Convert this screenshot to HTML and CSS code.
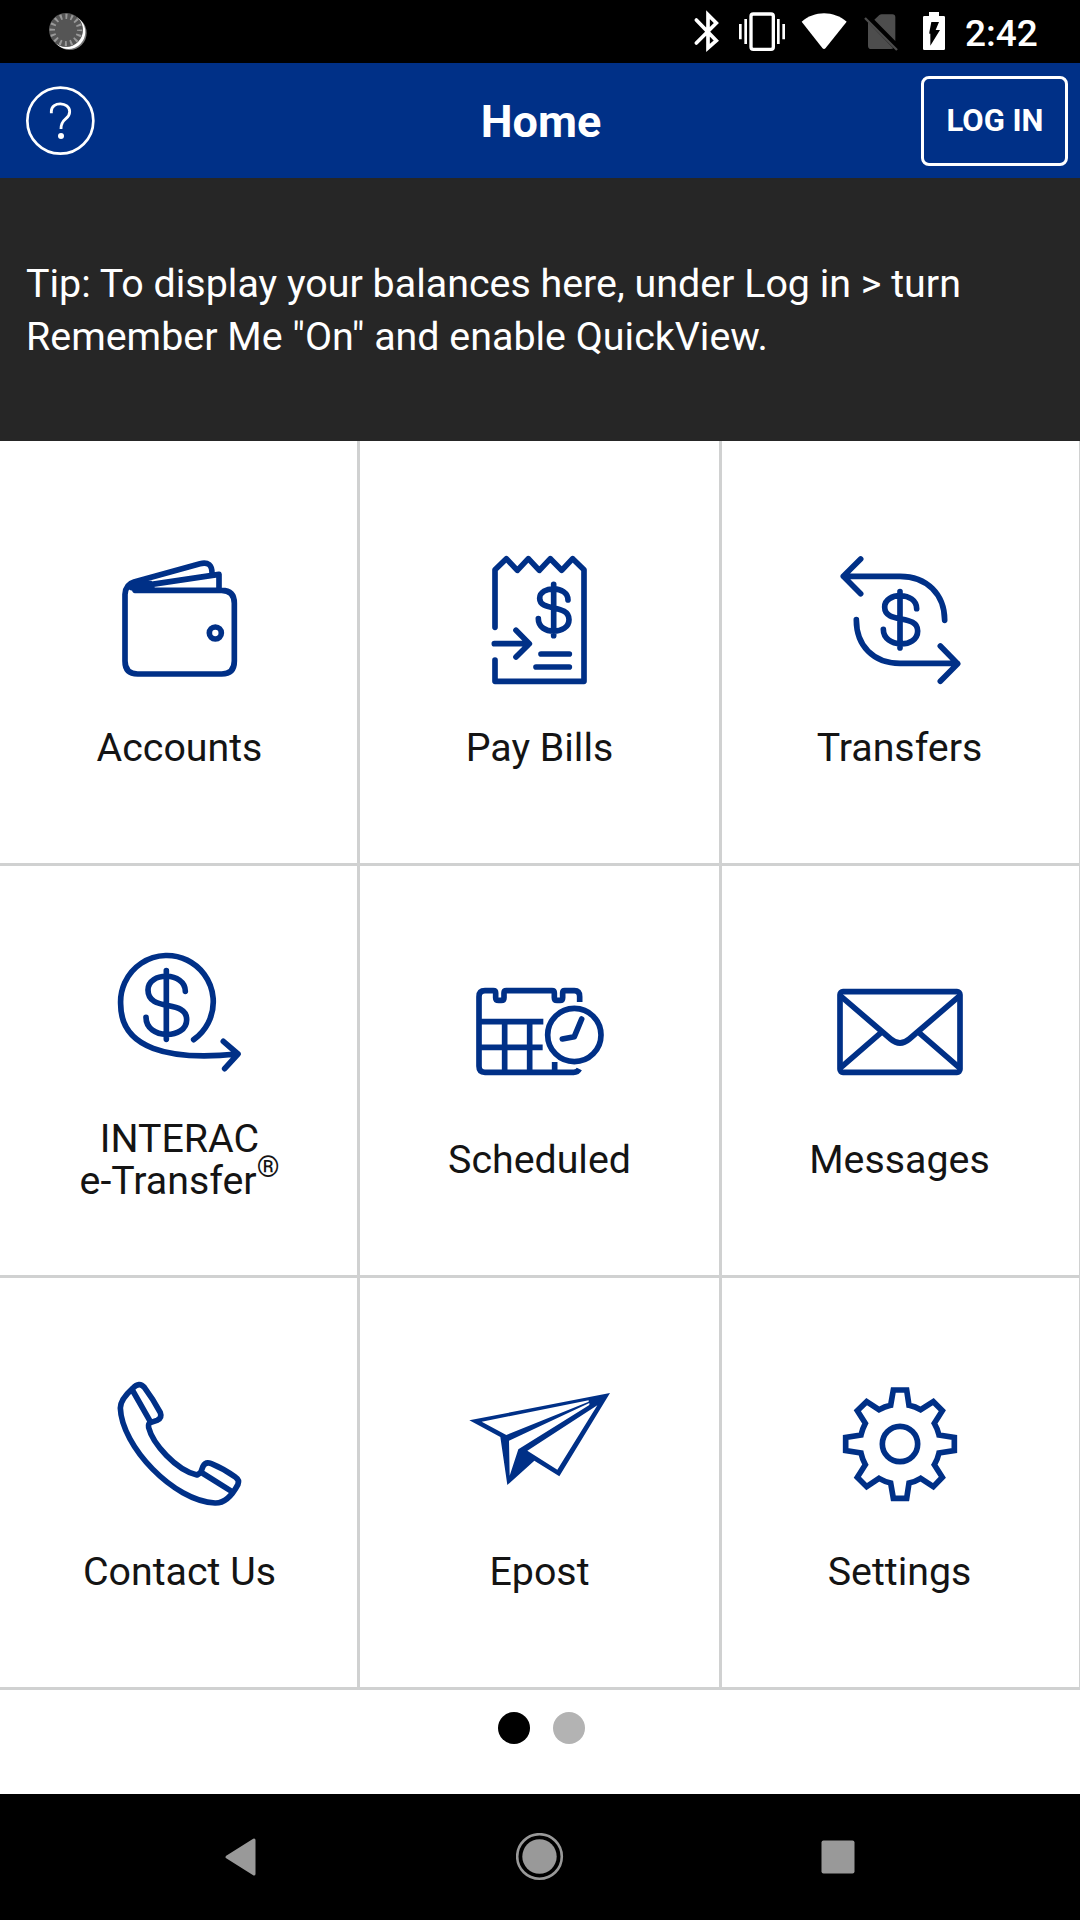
FILE: index.html
```
<!DOCTYPE html>
<html lang="en">
<head>
	<meta charset="UTF-8">
	<title>Home</title>
	<link rel="stylesheet" href="styles.css">
</head>
<body>
	<div class="status">
		<svg class="spinner" width="40" height="40" viewBox="145 34 120 120">
			<circle cx="210" cy="97" r="51" fill="#777"/>
			<circle cx="206" cy="94" r="51" fill="#fff"/>
			<circle cx="199" cy="88" r="51" fill="#555"/>
			<circle cx="199" cy="88" r="41" fill="none" stroke="#999" stroke-width="16" stroke-dasharray="6 10.1" stroke-dashoffset="3"/>
		</svg>
		<div class="status-icons">
			<svg width="35" height="63" viewBox="90 0 105 189">
				<path d="M109 60L169 122L144 144V44L169 69L109 129" fill="none" stroke="#fff" stroke-width="11" stroke-linecap="round" stroke-linejoin="miter"/>
			</svg>
			<svg width="55" height="63" viewBox="225 0 165 189">
				<rect x="273" y="42" width="67" height="106" rx="7" fill="none" stroke="#fff" stroke-width="10"/>
				<path d="M241 72V118M257 57V132M355 57V132M371 72V118" stroke="#fff" stroke-width="8"/>
			</svg>
			<svg width="50" height="63" viewBox="420 0 150 189">
				<path d="M425 65C462 31 522 31 560 65L497 144Q492 150 487 144Z" fill="#fff"/>
			</svg>
			<svg width="45" height="63" viewBox="600 0 135 189">
				<path d="M643 59L658 45Q661 43 665 43H697Q706 43 706 52V123ZM624 67L700 145Q697 147 693 147H634Q624 147 624 137Z" fill="#4d4d4d"/>
				<path d="M615 54L711 150" stroke="#4d4d4d" stroke-width="7"/>
				<path d="M632 58L712 138" stroke="#000" stroke-width="6"/>
			</svg>
			<svg width="35" height="63" viewBox="765 0 105 189">
				<path d="M807 36H837V48H851Q855 48 855 52V146Q855 150 851 150H793Q789 150 789 146V52Q789 48 793 48H807Z" fill="#fff"/>
				<path d="M814 66H837L827 90H840L811 137V101H808V97Z" fill="#000"/>
			</svg>
		</div>
		<span class="time">2:42</span>
	</div>

	<div class="header">
		<svg class="help" width="70" height="70" viewBox="77 257 210 210" fill="none" stroke="#fff">
			<circle cx="180" cy="361" r="99" stroke-width="8"/>
			<path d="M153 339V333C153 302 208 304 208 334C208 359 182 351 182 386" stroke-width="8.500"/>
			<circle cx="182" cy="407" r="9" fill="#fff" stroke="none"/>
		</svg>
		<h1>Home</h1>
		<div class="login">LOG IN</div>
	</div>

	<div class="tip">
		<p>Tip: To display your balances here, under Log in &gt; turn<br>Remember Me "On" and enable QuickView.</p>
	</div>

	<div class="grid">
		<div class="item first">
			<svg class="icon" viewBox="0 0 480 480">
				<path d="M105 151H365Q403 151 403 190V363Q403 402 365 402H113Q75 402 75 363V163Q77 133 102 126L300 71Q337 62 336 101M150 134L357 103V148"/>
				<path class="fill" d="M84 145Q90 124 118 123L155 122L165 145V152H105Q88 154 84 145Z"/>
				<circle cx="346" cy="279" r="18"/>
			</svg>
			<p>Accounts</p>
		</div>
		<div class="item">
			<svg class="icon" viewBox="0 0 480 480">
				<path d="M105 262V89L139 56L172 91L205 56L238 91L271 56L305 91L338 56L372 89V424H105V360M103 311H207M168 271L208 311L168 351M243 342H328M228 381H328"/>
				<path d="M281 133V287M324 180C324 136 239 137 239 175C239 217 327 190 327 239C327 284 235 287 235 236"/>
			</svg>
			<p>Pay Bills</p>
		</div>
		<div class="item last">
			<svg class="icon" viewBox="0 0 480 480">
				<path d="M122 57L70 109L122 161M70 109H240C320 109 374 163 374 241M109 239C109 317 160 370 240 370H412M361 318L413 371L361 424"/>
				<path d="M240 155V324M290 206C290 154 194 156 194 201C194 254 293 220 293 273C293 326 190 325 190 268"/>
			</svg>
			<p>Transfers</p>
		</div>
		<div class="item first">
			<svg class="icon" viewBox="120 33 480 480">
				<path d="M401 296A139 139 0 1 0 182 190C182 322 325 360 532 339M490 301L534 339L494 383"/>
				<path d="M319 89V295M376 151C376 92 264 91 264 147C264 215 380 173 380 236C380 296 258 297 258 229"/>
			</svg>
			<p class="two">INTERAC<br>e-Transfer<sup>®</sup></p>
		</div>
		<div class="item">
			<svg class="icon" viewBox="0 -24 480 480">
				<path class="butt" d="M359 126V110Q359 92 343 92H314Q308 92 308 99V113Q308 121 300 121H291Q283 121 283 113V99Q283 92 276 92H139Q132 92 132 99V113Q132 121 124 121H116Q107 121 107 113V99Q107 92 100 92H75Q57 92 57 110V319Q57 337 75 337H341Q353 337 358 327M57 185H250M57 262H248M134 185V337M209 185V337M284 306V337"/>
				<circle cx="343" cy="225" r="80"/>
				<path d="M365 177L343 230L307 237"/>
			</svg>
			<p>Scheduled</p>
		</div>
		<div class="item last">
			<svg class="icon" viewBox="0 -24 480 480">
				<rect x="60" y="95" width="360" height="242" rx="9"/>
				<path d="M63 109L212 237Q240 261 268 237L417 109M63 322L184 217M417 322L296 217"/>
			</svg>
			<p>Messages</p>
		</div>
		<div class="item first">
			<svg class="icon" viewBox="0 12 480 480">
				<path d="M98 85Q118 64 133 82Q160 118 181 158Q187 174 171 181L151 188Q144 191 146 203C158 251 228 330 291 345L302 338L309 319Q317 304 334 311Q373 327 407 352Q419 360 414 373C396 407 371 430 345 429C221 423 65 259 61 144C61 127 78 103 98 85ZM97 90L151 185M302 336L396 395"/>
			</svg>
			<p>Contact Us</p>
		</div>
		<div class="item">
			<svg class="icon plane" viewBox="0 -18 480 480">
				<path fill-rule="evenodd" d="M28 151L450 69L298 319L223 272L142 345L121 201ZM65 155L139 195L386 95L386 91ZM147 212L149 317L175 238L388 105L388 99ZM202 242L292 299L412 106Z"/>
			</svg>
			<p>Epost</p>
		</div>
		<div class="item last">
			<svg class="icon miter" viewBox="0 12 480 480">
				<path d="M220 90H260L267 136Q286 140 302 149L340 125L367 152L343 190Q353 207 357 225L403 232V272L357 279Q353 298 343 314L367 352L340 380L302 355Q286 365 267 369L260 415H220L212 369Q194 365 177 355L140 380L112 352L136 314Q127 298 123 279L77 272V232L123 225Q127 207 136 190L112 152L140 125L177 149Q194 140 212 136Z"/>
				<circle cx="240" cy="252" r="53"/>
			</svg>
			<p>Settings</p>
		</div>
	</div>

	<div class="pager">
		<i class="on"></i>
		<i></i>
	</div>

	<div class="nav">
		<svg width="48" height="48" viewBox="0 0 48 48">
			<path d="M10 24L37 7V41Z" fill="#999" stroke="#999" stroke-width="3" stroke-linejoin="round"/>
		</svg>
		<svg width="48" height="48" viewBox="0.5 0.5 48 48">
			<circle cx="24" cy="24" r="22.300" fill="none" stroke="#999" stroke-width="2.600"/>
			<circle cx="24" cy="24" r="17.200" fill="#999"/>
		</svg>
		<svg width="48" height="48" viewBox="0 0 48 48">
			<rect x="7.500" y="7.500" width="33" height="33" rx="2" fill="#999"/>
		</svg>
	</div>
</body>
</html>
```
FILE: styles.css
```
*{
	margin: 0;
	padding: 0;
	box-sizing: border-box;
}
body{
	width: 1080px;
	height: 1920px;
	background: #fff;
	font-family: Roboto, "Liberation Sans", sans-serif;
	overflow: hidden;
}
svg{
	display: block;
	flex: none;
}
.status{
	display: flex;
	align-items: center;
	height: 63px;
	padding-left: 48px;
	background: #000;
	color: #fff;
}
.status-icons{
	display: flex;
	gap: 10px;
	margin-left: 602px;
}
.time{
	margin-left: 15px;
	padding-top: 3px;
	font-size: 37px;
	font-weight: 500;
}
.header{
	display: grid;
	grid-template-columns: 147px 1fr 147px;
	align-items: center;
	height: 115px;
	padding: 0 12px 0 26px;
	background: #003087;
	color: #fff;
}
.header h1{
	padding: 2px 26px 0 14px;
	font-size: 45px;
	font-weight: 700;
	text-align: center;
}
.login{
	height: 90px;
	border: 3px solid #fff;
	border-radius: 8px;
	padding-left: 1px;
	font-size: 31px;
	font-weight: 700;
	line-height: 83px;
	text-align: center;
}
.tip{
	height: 263px;
	padding: 79px 26px 0;
	background: #262626;
	color: #fff;
	font-size: 39.4px;
	line-height: 53px;
	white-space: nowrap;
}
.grid{
	display: grid;
	/* last column runs 2px past the screen so its border is cut */
	grid-template-columns: 360px 362px 360px;
	grid-template-rows: 425px 412px 412px;
}
.item{
	display: flex;
	flex-direction: column;
	align-items: center;
	justify-content: flex-end;
	padding-bottom: 94px;
	border-right: 3px solid #d0d1d1;
	border-bottom: 3px solid #d0d1d1;
	color: #141414;
	font-size: 39.35px;
	line-height: 42px;
	text-align: center;
}
.item.first{
	padding-left: 2px;
}
.item.last{
	padding-right: 2px;
}
.item p{
	height: 42px;
	margin-top: 27px;
}
.item .two{
	height: 84px;
	margin-top: 6px;
	margin-bottom: -21px;
}
sup{
	font-size: 29px;
	line-height: 0;
	vertical-align: 17px;
}
.icon{
	width: 160px;
	height: 160px;
	fill: none;
	stroke: #003087;
	stroke-width: 17;
	stroke-linecap: round;
	stroke-linejoin: round;
}
.icon .fill{
	fill: #003087;
	stroke: none;
}
.icon .butt{
	stroke-linecap: butt;
}
.icon.miter{
	stroke-linejoin: miter;
}
.icon.plane{
	fill: #003087;
	stroke: none;
}
.pager{
	display: flex;
	justify-content: center;
	gap: 23px;
	height: 104px;
	padding: 22px 0 0 2px;
}
.pager i{
	width: 32px;
	height: 32px;
	border-radius: 50%;
	background: #b3b3b3;
}
.pager .on{
	background: #000;
}
.nav{
	display: flex;
	justify-content: space-between;
	height: 126px;
	padding: 39px 218px 0 217px;
	background: #000;
}
```
